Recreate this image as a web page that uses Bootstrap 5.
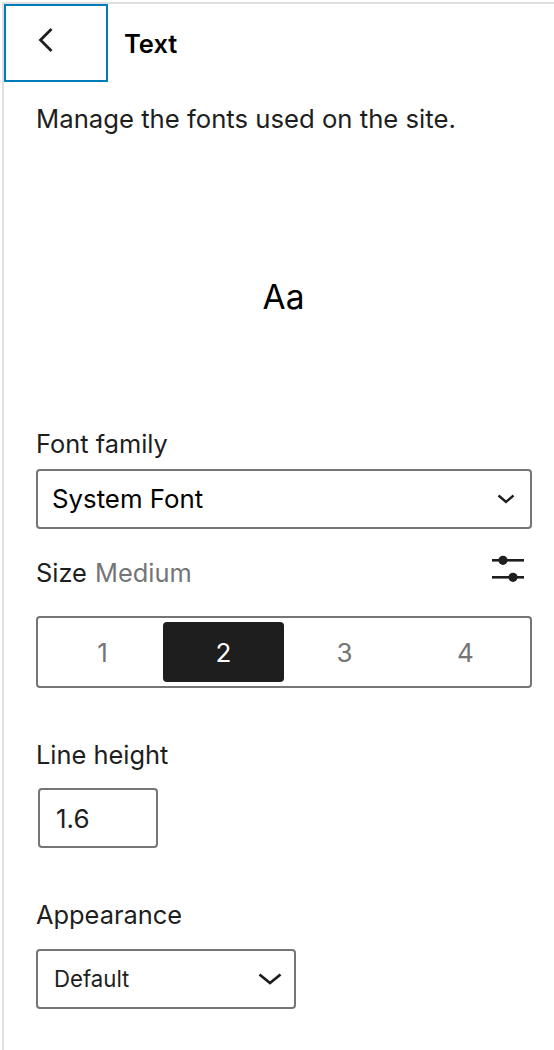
<!DOCTYPE html>
<html lang="en">
<head>
<meta charset="utf-8">
<title>Text</title>
<link href="https://cdn.jsdelivr.net/npm/bootstrap@5.3.0/dist/css/bootstrap.min.css" rel="stylesheet">
<style>
html, body { height: 100%; }
body { font-family: Inter, "Liberation Sans", sans-serif; color: #1e1e1e; background: #fff; overflow: hidden; }
.panel { height: 1050px; margin-top: 2px; margin-left: 2px; border-top: 2px solid #e0e0e0; border-left: 2px solid #e0e0e0; padding-right: 23px; }
.head-row { height: 78px; }
.back-btn { width: 104px; height: 78px; background: #fff; border: 2px solid #007cba; border-radius: 0; padding: 0; display: flex; align-items: center; justify-content: center; }
.back-btn svg { margin-top: -6px; margin-right: 20px; }
.head-title { font-size: 25.5px; font-weight: 600; margin: 1px 0 0 16px; color: #000; line-height: 34px; }
.body-area { padding-left: 32px; }
.intro { font-size: 25.7px; line-height: 40px; margin: 17px 0 0; }
.preview { height: 265px; margin-top: 24px; font-size: 33.5px; line-height: 1; color: #000; padding-top: 4px; }
.field-label { font-size: 25.4px; line-height: 32px; margin: 0 0 9px; display: block; }
.pick { border: 2px solid #757575; border-radius: 4px; background: #fff; display: flex; align-items: center; justify-content: space-between; }
.pick-family { height: 60px; width: 496px; padding: 0 14px; font-size: 25.8px; color: #000; }
.pick-look { height: 60px; width: 260px; padding: 0 12px 0 16px; font-size: 22.2px; }
.size-row { margin-top: 28px; height: 32px; }
.size-word { font-size: 25.4px; line-height: 32px; }
.size-value { color: #757575; margin-left: 1px; }
.size-icon { margin-right: 7px; margin-bottom: 11px; }
.seg { width: 496px; height: 72px; margin-top: 27px; border: 2px solid #757575; border-radius: 4px; padding: 4px; display: grid; grid-template-columns: repeat(4, 121px); }
.seg-item { border: 0; background: transparent; padding: 0; border-radius: 4px; font-size: 26px; color: #757575; display: flex; align-items: center; justify-content: center; }
.seg-on { background: #1e1e1e; color: #fff; }
.block-gap { margin-top: 51px; margin-bottom: 17px; }
.num-box { width: 120px; height: 60px; margin-left: 2px; border: 2px solid #757575; border-radius: 4px; padding: 0 16px; font-size: 26px; display: flex; align-items: center; }
.block-gap2 { margin-top: 51px; margin-bottom: 18px; }
</style>
</head>
<body>
<div class="panel">
  <div class="head-row d-flex align-items-center">
    <button class="back-btn" type="button" aria-label="Back">
      <svg width="24" height="32" viewBox="0 0 24 32" fill="none" stroke="#1e1e1e" stroke-width="2.8"><path d="M17.5 5 L6.5 16 L17.5 27"/></svg>
    </button>
    <h1 class="head-title">Text</h1>
  </div>
  <div class="body-area">
    <p class="intro">Manage the fonts used on the site.</p>
    <div class="preview d-flex align-items-center justify-content-center">Aa</div>
    <label class="field-label">Font family</label>
    <div class="pick pick-family">
      <span>System Font</span>
      <svg width="20" height="12" viewBox="0 0 20 12" fill="none" stroke="#1e1e1e" stroke-width="2.4"><path d="M2.5 2.5 L10 9 L17.5 2.5"/></svg>
    </div>
    <div class="size-row d-flex justify-content-between align-items-center">
      <span class="size-word">Size<span class="size-value"> Medium</span></span>
      <svg class="size-icon" width="32" height="28" viewBox="0 0 32 28" fill="#1e1e1e"><rect y="5" width="32" height="2.6"/><circle cx="11" cy="6.3" r="4.6"/><rect y="22" width="32" height="2.6"/><circle cx="21" cy="23.3" r="4.6"/></svg>
    </div>
    <div class="seg">
      <button class="seg-item" type="button">1</button>
      <button class="seg-item seg-on" type="button">2</button>
      <button class="seg-item" type="button">3</button>
      <button class="seg-item" type="button">4</button>
    </div>
    <label class="field-label block-gap">Line height</label>
    <div class="num-box">1.6</div>
    <label class="field-label block-gap2">Appearance</label>
    <div class="pick pick-look">
      <span>Default</span>
      <svg width="24" height="14" viewBox="0 0 24 14" fill="none" stroke="#1e1e1e" stroke-width="2.8"><path d="M1.5 2.5 L12 11 L22.5 2.5"/></svg>
    </div>
  </div>
</div>
<script src="https://cdn.jsdelivr.net/npm/bootstrap@5.3.0/dist/js/bootstrap.bundle.min.js"></script>
</body>
</html>
